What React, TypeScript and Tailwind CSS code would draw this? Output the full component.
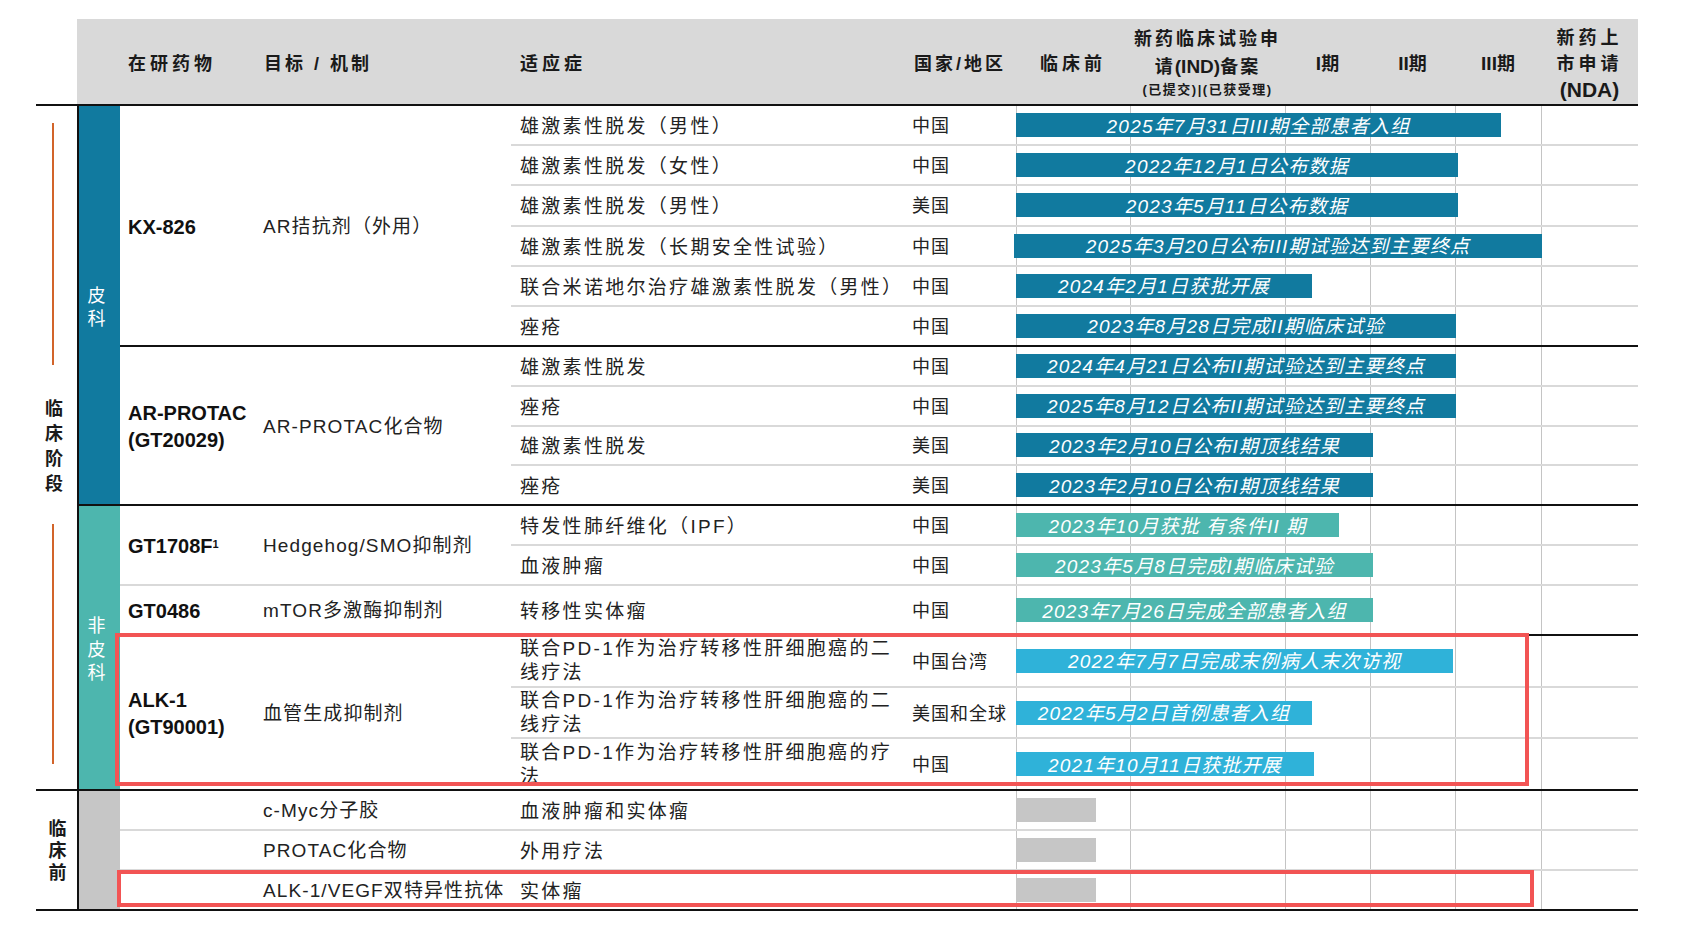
import clsx from "clsx";
import type { ReactNode } from "react";

type Row = {
  ind: string[];
  country?: string;
  bar: string;
  w: number;
  x?: number;
  label?: string;
};

type Group = {
  drug?: ReactNode;
  mech?: string;
  box: string;
  rows: Row[];
};

type Category = {
  chars: string[];
  color: string;
  box: string;
  groups: Group[];
};

const DERM = "bg-[#117a9f]";
const NON = "bg-[#4db6ae]";
const ALK = "bg-[#2fb2d9]";
const PRE = "bg-[#c6c6c6]";

const clinical: Category[] = [
  {
    chars: ["皮", "科"],
    color: "bg-[#117a9f]",
    box: "border-b-2 border-[#111]",
    groups: [
      {
        drug: "KX-826",
        mech: "AR拮抗剂（外用）",
        box: "h-[241px] border-b-2 border-[#111]",
        rows: [
          { ind: ["雄激素性脱发（男性）"], country: "中国", bar: DERM, w: 485, label: "2025年7月31日III期全部患者入组" },
          { ind: ["雄激素性脱发（女性）"], country: "中国", bar: DERM, w: 442, label: "2022年12月1日公布数据" },
          { ind: ["雄激素性脱发（男性）"], country: "美国", bar: DERM, w: 442, label: "2023年5月11日公布数据" },
          { ind: ["雄激素性脱发（长期安全性试验）"], country: "中国", bar: DERM, w: 528, x: -2, label: "2025年3月20日公布III期试验达到主要终点" },
          { ind: ["联合米诺地尔治疗雄激素性脱发（男性）"], country: "中国", bar: DERM, w: 296, label: "2024年2月1日获批开展" },
          { ind: ["痤疮"], country: "中国", bar: DERM, w: 440, label: "2023年8月28日完成II期临床试验" },
        ],
      },
      {
        drug: (
          <>
            AR-PROTAC
            <br />
            (GT20029)
          </>
        ),
        mech: "AR-PROTAC化合物",
        box: "h-[157px]",
        rows: [
          { ind: ["雄激素性脱发"], country: "中国", bar: DERM, w: 440, label: "2024年4月21日公布II期试验达到主要终点" },
          { ind: ["痤疮"], country: "中国", bar: DERM, w: 440, label: "2025年8月12日公布II期试验达到主要终点" },
          { ind: ["雄激素性脱发"], country: "美国", bar: DERM, w: 357, label: "2023年2月10日公布I期顶线结果" },
          { ind: ["痤疮"], country: "美国", bar: DERM, w: 357, label: "2023年2月10日公布I期顶线结果" },
        ],
      },
    ],
  },
  {
    chars: ["非", "皮", "科"],
    color: "bg-[#4db6ae]",
    box: "",
    groups: [
      {
        drug: (
          <>
            GT1708F<sup className="text-[11px]">1</sup>
          </>
        ),
        mech: "Hedgehog/SMO抑制剂",
        box: "h-[80px] border-b-2 border-[#d9d9d9]",
        rows: [
          { ind: ["特发性肺纤维化（IPF）"], country: "中国", bar: NON, w: 323, label: "2023年10月获批 有条件II 期" },
          { ind: ["血液肿瘤"], country: "中国", bar: NON, w: 357, label: "2023年5月8日完成I期临床试验" },
        ],
      },
      {
        drug: "GT0486",
        mech: "mTOR多激酶抑制剂",
        box: "h-[50px] border-b-2 border-[#111]",
        rows: [{ ind: ["转移性实体瘤"], country: "中国", bar: NON, w: 357, label: "2023年7月26日完成全部患者入组" }],
      },
      {
        drug: (
          <>
            ALK-1
            <br />
            (GT90001)
          </>
        ),
        mech: "血管生成抑制剂",
        box: "h-[153px]",
        rows: [
          { ind: ["联合PD-1作为治疗转移性肝细胞癌的二", "线疗法"], country: "中国台湾", bar: ALK, w: 437, label: "2022年7月7日完成末例病人末次访视" },
          { ind: ["联合PD-1作为治疗转移性肝细胞癌的二", "线疗法"], country: "美国和全球", bar: ALK, w: 296, label: "2022年5月2日首例患者入组" },
          { ind: ["联合PD-1作为治疗转移性肝细胞癌的疗", "法"], country: "中国", bar: ALK, w: 298, label: "2021年10月11日获批开展" },
        ],
      },
    ],
  },
];

const preclinical: Category = {
  chars: [],
  color: "bg-[#c6c6c6]",
  box: "",
  groups: [
    { mech: "c-Myc分子胶", box: "h-[40px] border-b-2 border-[#d9d9d9]", rows: [{ ind: ["血液肿瘤和实体瘤"], bar: PRE, w: 80 }] },
    { mech: "PROTAC化合物", box: "h-[40px] border-b-2 border-[#d9d9d9]", rows: [{ ind: ["外用疗法"], bar: PRE, w: 80 }] },
    { mech: "ALK-1/VEGF双特异性抗体", box: "h-[38px]", rows: [{ ind: ["实体瘤"], bar: PRE, w: 80 }] },
  ],
};

function GanttLines() {
  return (
    <div className="absolute inset-0 grid grid-cols-[114px_155px_85px_85px_86px_97px]">
      <div className="border-l border-[#c4c4c4]" />
      <div className="border-l border-[#c4c4c4]" />
      <div className="border-l border-[#c4c4c4]" />
      <div className="border-l border-[#c4c4c4]" />
      <div className="border-l border-[#c4c4c4]" />
      <div className="border-l border-[#c4c4c4]" />
    </div>
  );
}

function DataRow({ row, last }: { row: Row; last: boolean }) {
  const twoLines = row.ind.length > 1;
  return (
    <div className={clsx("flex min-h-0 flex-1", !last && "border-b-2 border-[#d9d9d9]")}>
      <div
        className={clsx(
          "flex w-[394px] flex-col justify-center whitespace-nowrap pl-[9px] text-[19px] tracking-[2.3px]",
          twoLines ? "pt-[1px] leading-[24px]" : "pt-[3px] leading-[25px]"
        )}
      >
        {row.ind.map((l) => (
          <span key={l}>{l}</span>
        ))}
      </div>
      <div className="flex w-[111px] items-center whitespace-nowrap pl-[7px] pt-[3px] text-[18px] tracking-[1px]">{row.country}</div>
      <div className="relative flex w-[622px] items-center">
        <GanttLines />
        <div
          className={clsx(
            "relative flex h-[24px] items-center justify-center whitespace-nowrap pt-[2px] text-[19px] italic leading-none tracking-[1.2px] text-white",
            row.bar
          )}
          style={{ width: row.w, marginLeft: row.x ?? 0 }}
        >
          {row.label}
        </div>
      </div>
    </div>
  );
}

function GroupBlock({ g }: { g: Group }) {
  return (
    <div className={clsx("flex", g.box)}>
      <div className="flex w-[140px] items-center pl-[8px] pt-[3px] font-['Liberation_Sans','Noto_Sans_CJK_SC',sans-serif] text-[20px] font-bold leading-[27px] text-[#111]">
        <div>{g.drug}</div>
      </div>
      <div className="flex w-[251px] items-center whitespace-nowrap pl-[3px] pt-[3px] text-[19px] tracking-[1.1px]">{g.mech}</div>
      <div className="flex flex-col">
        {g.rows.map((r, i) => (
          <DataRow key={i} row={r} last={i === g.rows.length - 1} />
        ))}
      </div>
    </div>
  );
}

function CategoryBlock({ c }: { c: Category }) {
  return (
    <div className={clsx("flex", c.box)}>
      <div
        className={clsx(
          "flex w-[43px] flex-col items-center justify-center border-l-2 border-[#111] pr-[6px] pt-[6px] text-[18px] leading-[23.5px] text-white",
          c.color
        )}
      >
        {c.chars.map((ch, i) => (
          <span key={i}>{ch}</span>
        ))}
      </div>
      <div className="flex flex-col">
        {c.groups.map((g, i) => (
          <GroupBlock key={i} g={g} />
        ))}
      </div>
    </div>
  );
}

function Header() {
  return (
    <div className="flex h-[87px] border-b-2 border-[#111] font-bold text-[#1a1a1a]">
      <div className="w-[41px] bg-white" />
      <div className="flex flex-1 bg-[#d9d9d9]">
        <div className="w-[43px]" />
        <div className="flex w-[140px] items-center pl-[8px] pt-[6px] text-[18px] tracking-[4px]">在研药物</div>
        <div className="flex w-[251px] items-center pl-[4px] pt-[6px] text-[18px] tracking-[3px]">目标 / 机制</div>
        <div className="flex w-[394px] items-center pl-[9px] pt-[6px] text-[18px] tracking-[4px]">适应症</div>
        <div className="flex w-[111px] items-center whitespace-nowrap pl-[9px] pt-[6px] text-[18px] tracking-[3px]">国家/地区</div>
        <div className="grid w-[622px] grid-cols-[114px_155px_85px_85px_86px_97px] text-center">
          <div className="flex items-center justify-center pt-[6px] text-[18px] tracking-[4px]">临床前</div>
          <div className="flex flex-col items-center pt-[6px] text-[18px]">
            <span className="leading-[28px] tracking-[3px]">新药临床试验申</span>
            <span className="leading-[28px] tracking-[2px]">
              请<span className="font-['Liberation_Sans'] text-[19px] tracking-normal">(IND)</span>备案
            </span>
            <span className="whitespace-nowrap text-[13px] leading-[18px] tracking-[1.5px]">(已提交)|(已获受理)</span>
          </div>
          <div className="flex items-center justify-center pt-[6px] text-[18px]">
            <span className="font-['Liberation_Sans'] text-[19px]">I</span>期
          </div>
          <div className="flex items-center justify-center pt-[6px] text-[18px]">
            <span className="font-['Liberation_Sans'] text-[19px]">II</span>期
          </div>
          <div className="flex items-center justify-center pt-[6px] text-[18px]">
            <span className="font-['Liberation_Sans'] text-[19px]">III</span>期
          </div>
          <div className="flex flex-col items-center pt-[6px] text-[18px] tracking-[4px]">
            <span className="leading-[26px]">新药上</span>
            <span className="leading-[26px]">市申请</span>
            <span className="font-['Liberation_Sans'] text-[21px] leading-[26px] tracking-normal">(NDA)</span>
          </div>
        </div>
      </div>
    </div>
  );
}

export default function App() {
  return (
    <div className="relative min-h-[930px] w-[1690px] bg-white pl-[36px] pt-[19px] font-['Liberation_Sans','Noto_Sans_CJK_SC',sans-serif] text-[#222]">
      <div className="w-[1602px]">
        <Header />

        {/* 临床阶段 */}
        <div className="flex border-b-2 border-[#111]">
          <div className="flex w-[41px] flex-col items-center pr-[5px]">
            <div className="mr-[3px] mt-[17px] h-[242px] w-[2px] bg-[#d2642a]" />
            <div className="mt-[32px] flex flex-col items-center text-[18px] font-bold leading-[25px] text-[#1a1a1a]">
              <span>临</span>
              <span>床</span>
              <span>阶</span>
              <span>段</span>
            </div>
            <div className="mr-[3px] mt-[27px] h-[240px] w-[2px] bg-[#d2642a]" />
          </div>
          <div className="flex flex-col">
            {clinical.map((c, i) => (
              <CategoryBlock key={i} c={c} />
            ))}
          </div>
        </div>

        {/* 临床前 */}
        <div className="flex border-b-2 border-[#111]">
          <div className="flex w-[41px] flex-col items-center justify-center pl-[2px] pt-[2px] text-[18px] font-bold leading-[22px] text-[#1a1a1a]">
            <span>临</span>
            <span>床</span>
            <span>前</span>
          </div>
          <CategoryBlock c={preclinical} />
        </div>
      </div>

      {/* highlight boxes */}
      <div className="absolute left-[115px] top-[633px] h-[153px] w-[1414px] border-4 border-[#f25454]" />
      <div className="absolute left-[117px] top-[870px] h-[37px] w-[1417px] border-4 border-[#f25454]" />
    </div>
  );
}
